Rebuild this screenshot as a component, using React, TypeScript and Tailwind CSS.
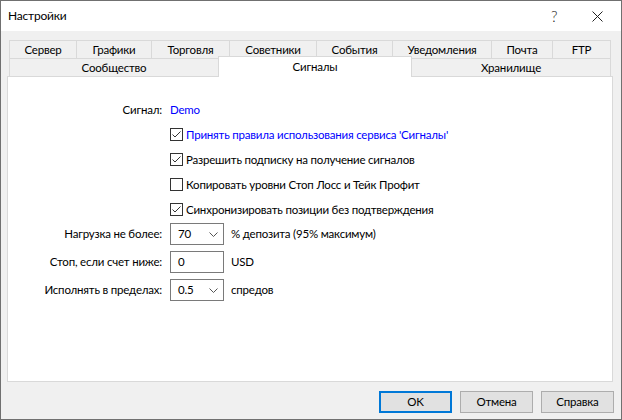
const row1 = [
  { label: "Сервер", w: "w-[67px]" },
  { label: "Графики", w: "w-[75px]" },
  { label: "Торговля", w: "w-[78px]" },
  { label: "Советники", w: "w-[87px]" },
  { label: "События", w: "w-[76px]" },
  { label: "Уведомления", w: "w-[99px]" },
  { label: "Почта", w: "w-[61px]" },
  { label: "FTP", w: "w-[59px] border-r" },
];

const checks = [
  { label: "Принять правила использования сервиса 'Сигналы'", on: true, link: true },
  { label: "Разрешить подписку на получение сигналов", on: true },
  { label: "Копировать уровни Стоп Лосс и Тейк Профит", on: false },
  { label: "Синхронизировать позиции без подтверждения", on: true },
];

function Checkbox({ on }: { on: boolean }) {
  return (
    <span className="w-[13px] h-[13px] border border-[#333] bg-white shrink-0 flex items-center justify-center">
      {on && (
        <svg width="11" height="11" viewBox="0 0 11 11">
          <polyline points="1.5,5.5 4,8 9.5,2.5" fill="none" stroke="#333" strokeWidth="1" />
        </svg>
      )}
    </span>
  );
}

function Chevron() {
  return (
    <svg width="9" height="5" viewBox="0 0 9 5" className="shrink-0">
      <polyline points="0.5,0.5 4.5,4.5 8.5,0.5" fill="none" stroke="#555" strokeWidth="1" />
    </svg>
  );
}

function Field({ value, combo }: { value: string; combo?: boolean }) {
  return (
    <div className="w-[54px] h-[22px] border border-[#7a7a7a] bg-white flex items-center justify-between pl-[7px] pr-[5px]">
      <span>{value}</span>
      {combo && <Chevron />}
    </div>
  );
}

export default function App() {
  return (
    <div
      className="w-[622px] h-[420px] border border-[#707070] flex flex-col text-[11.5px] tracking-[-0.2px] text-black bg-white"
      style={{ fontFamily: '"Segoe UI", Lato, sans-serif' }}
    >
      <div className="h-[30px] shrink-0 flex items-center pl-[7px] bg-white">
        <span className="flex-1 text-[12px]">Настройки</span>
        <span className="w-[14px] text-[15px] font-light text-[#222] mr-[27px]">?</span>
        <svg width="11" height="11" viewBox="0 0 11 11" className="mr-[18px]">
          <path d="M0.5 0.5L10.5 10.5M10.5 0.5L0.5 10.5" stroke="#222" strokeWidth="1" />
        </svg>
      </div>

      <div className="flex-1 bg-[#f0f0f0] pt-[9px] pl-[6px] pr-[8px] flex flex-col">
        <div className="mx-[2px] flex flex-col">
          <div className="flex h-[18px]">
            {row1.map((t) => (
              <div
                key={t.label}
                className={`${t.w} border-l border-t border-[#d9d9d9] flex items-center justify-center`}
              >
                {t.label}
              </div>
            ))}
          </div>
          <div className="flex h-[18px]">
            <div className="w-[209px] border-l border-t border-[#d9d9d9] flex items-center justify-center">
              Сообщество
            </div>
            <div className="relative z-10 -mt-[2px] w-[194px] h-[21px] border-l border-t border-r border-[#d9d9d9] bg-white flex items-center justify-center">
              Сигналы
            </div>
            <div className="w-[199px] border-t border-r border-[#d9d9d9] flex items-center justify-center">
              Хранилище
            </div>
          </div>
        </div>

        <div className="flex-1 bg-white border border-[#d9d9d9] pt-[20px] pl-px flex flex-col">
          <div className="flex items-center h-[25px] gap-[8px]">
            <span className="w-[153px] text-right">Сигнал:</span>
            <span className="text-[#0000ff]">Demo</span>
          </div>
          {checks.map((c) => (
            <div key={c.label} className="flex items-center h-[25px] pl-[161px]">
              <Checkbox on={c.on} />
              <span className={`ml-[3px] ${c.link ? "text-[#0000ff]" : ""}`}>{c.label}</span>
            </div>
          ))}
          <div className="mt-[1px] flex flex-col gap-[6px]">
            <div className="flex items-center gap-[8px]">
              <span className="w-[153px] text-right">Нагрузка не более:</span>
              <Field value="70" combo />
              <span className="-ml-px">% депозита (95% максимум)</span>
            </div>
            <div className="flex items-center gap-[8px]">
              <span className="w-[153px] text-right">Стоп, если счет ниже:</span>
              <Field value="0" />
              <span className="-ml-px">USD</span>
            </div>
            <div className="flex items-center gap-[8px]">
              <span className="w-[153px] text-right">Исполнять в пределах:</span>
              <Field value="0.5" combo />
              <span className="-ml-px">спредов</span>
            </div>
          </div>
        </div>

        <div className="mt-[9px] mb-[6px] -mr-px flex justify-end gap-[8px]">
          <button className="w-[73px] h-[22px] bg-[#e1e1e1] border-2 border-[#0078d7]">OK</button>
          <button className="w-[73px] h-[22px] bg-[#e1e1e1] border border-[#adadad]">Отмена</button>
          <button className="w-[73px] h-[22px] bg-[#e1e1e1] border border-[#adadad]">Справка</button>
        </div>
      </div>
    </div>
  );
}
